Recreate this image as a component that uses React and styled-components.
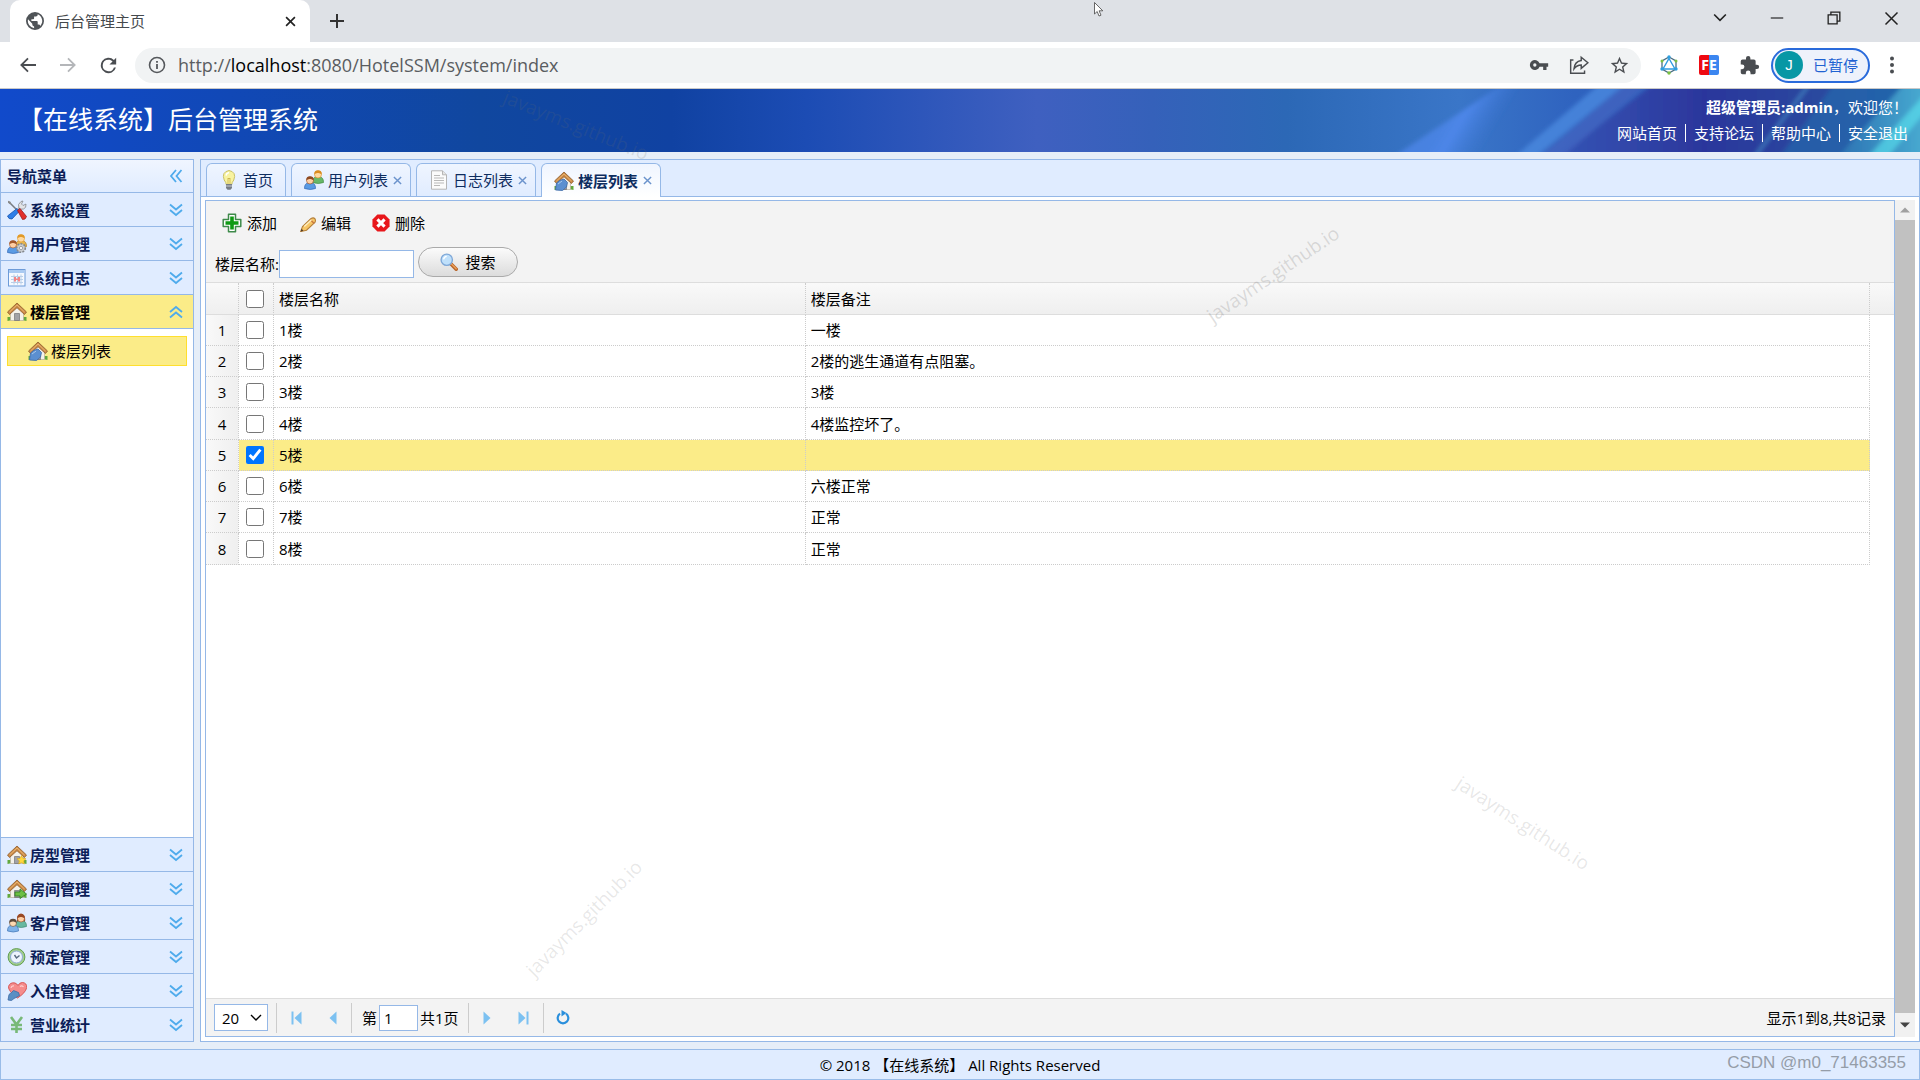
import React, { useState } from 'react'
import styled, { createGlobalStyle, css } from 'styled-components'

const GlobalStyle = createGlobalStyle`
  * {
    box-sizing: border-box;
  }
  body {
    margin: 0;
    overflow: hidden;
    background: #fff;
  }
  body, button, input, select {
    font-family: "Open Sans", "Noto Sans CJK SC", sans-serif;
    font-size: 15px;
    line-height: 20px;
    color: #000;
  }
  button {
    padding: 0;
    border: 0;
    background: none;
    white-space: nowrap;
  }
  a {
    color: inherit;
    text-decoration: none;
  }
  svg {
    display: block;
    flex: none;
  }
`

const Shell = styled.div`
  position: relative;
  display: flex;
  flex-direction: column;
  height: 100vh;
  overflow: hidden;
`

/* browser chrome */

const TitleBar = styled.div`
  display: flex;
  flex: none;
  height: 42px;
  padding-left: 10px;
  background: #dee1e6;
`

const BrowserTab = styled.div`
  display: flex;
  align-items: center;
  width: 300px;
  padding: 0 12px 0 16px;
  gap: 11px;
  border-radius: 10px 10px 0 0;
  background: #fff;
  color: #45494d;
`

const BrowserTabTitle = styled.span`
  flex: 1;
`

const ChromeButton = styled.button`
  display: flex;
  align-items: center;
  justify-content: center;
  flex: none;
  width: ${p => p.$width || 40}px;
  height: 36px;
  color: ${p => p.$color || '#4a4d51'};
`

const TabClose = styled(ChromeButton)`
  width: 16px;
`

const NewTab = styled(ChromeButton)`
  width: 54px;
  height: 42px;
`

const WindowControls = styled.div`
  display: flex;
  margin-left: auto;
`

const BrowserBar = styled.div`
  display: flex;
  align-items: center;
  flex: none;
  height: 47px;
  padding: 0 14px 0 8px;
  border-bottom: 1px solid #c9c9c9;
  background: #fff;
`

const AddressBar = styled.div`
  display: flex;
  align-items: center;
  flex: 1;
  height: 35px;
  margin: 0 8px 0 7px;
  padding: 0 2px 0 13px;
  border-radius: 18px;
  background: #f1f3f4;
`

const Url = styled.div`
  flex: 1;
  margin-left: 12px;
  font-size: 18px;
  line-height: 24px;
  color: #5a5d61;

  b {
    font-weight: 400;
    color: #000;
  }
`

const Profile = styled.button`
  display: flex;
  align-items: center;
  gap: 10px;
  width: 99px;
  height: 35px;
  margin: 0 8px 0 2px;
  padding-left: 2px;
  border: 2px solid #2a6bdb;
  border-radius: 18px;
  background: #eef2fb;
  color: #1f62d2;
`

const Avatar = styled.span`
  width: 28px;
  height: 28px;
  border-radius: 50%;
  background: #0797a5;
  color: #fff;
  font-family: "Liberation Sans", sans-serif;
  line-height: 28px;
  text-align: center;
`

/* page header and footer */

const Header = styled.header`
  position: relative;
  display: flex;
  justify-content: space-between;
  flex: none;
  height: 63px;
  padding: 5px 12px 0 18px;
  overflow: hidden;
  color: #fff;
  background: linear-gradient(
    90deg,
    #114acb 0%,
    #1148b6 12%,
    #10479f 25%,
    #1042a2 35%,
    #1c4cb4 42%,
    #3f60c0 54%,
    #3561ba 60%,
    #2c68b6 67%,
    #3a76c8 76%,
    #2f63bf 82%,
    #2c56b0 100%
  );
`

const HeaderArt = styled.svg`
  position: absolute;
  top: 0;
  right: 0;
`

const SystemName = styled.h1`
  position: relative;
  margin: 0;
  font-size: 25px;
  font-weight: 400;
  line-height: 50px;
`

const HeaderSide = styled.div`
  position: relative;
  text-align: right;
  line-height: 26px;
`

const Links = styled.nav`
  display: flex;
  gap: 8px;
`

const Bar = styled.span`
  width: 1px;
  height: 18px;
  margin: 4px 0;
  background: #fff;
`

const Footer = styled.footer`
  flex: none;
  height: 31px;
  border: 1px solid #99bce8;
  background: #e0ecff;
  line-height: 31px;
  text-align: center;
`

/* layout panels */

const Workspace = styled.div`
  display: flex;
  flex: 1;
  gap: 6px;
  min-height: 0;
  padding: 7px 0;
  background: #e6eef8;
`

const Sidebar = styled.aside`
  display: flex;
  flex-direction: column;
  flex: none;
  width: 194px;
  border: 1px solid #95b8e7;
  background: #fff;
`

const sideHeader = css`
  display: flex;
  align-items: center;
  justify-content: space-between;
  flex: none;
  height: 34px;
  padding: 0 10px 0 6px;
  border: 0 solid #95b8e7;
  border-bottom-width: 1px;
  font-weight: 700;
  color: #0b1d57;
`

const SidebarTitle = styled.div`
  ${sideHeader}
  height: 33px;
  background: linear-gradient(#f0f5ff, #e0ecff);
`

const MenuHeader = styled.button`
  ${sideHeader}
  background: ${p => (p.$open ? '#fbec88' : '#e0ecff')};
  ${p => p.$open && 'color: #000;'}
  ${p => p.$docked && 'border-width: 1px 0 0;'}
`

const IconText = styled.span`
  display: flex;
  align-items: center;
  gap: 3px;
`

const MenuBody = styled.div`
  flex: 1;
  padding: 7px 6px;
`

const MenuLink = styled.a`
  display: flex;
  align-items: center;
  gap: 3px;
  height: 30px;
  padding-left: 20px;
  border: 1px solid #ffdf2e;
  background: #fbec88;
`

const Center = styled.main`
  display: flex;
  flex-direction: column;
  flex: 1;
  min-width: 0;
  border: 1px solid #95b8e7;
  background: #fff;
`

const TabStrip = styled.div`
  display: flex;
  gap: 5px;
  flex: none;
  height: 37px;
  padding: 3px 5px 0;
  border-bottom: 1px solid #95b8e7;
  background: #e0ecff;
`

const Tab = styled.div`
  display: flex;
  align-items: center;
  gap: 4px;
  padding: 0 ${p => (p.$closable ? 8 : 12)}px 0 12px;
  border: 1px solid #95b8e7;
  border-bottom: 0;
  border-radius: 6px 6px 0 0;
  background: linear-gradient(#eff5ff, #e0ecff);

  ${p =>
    p.$active &&
    css`
      margin-bottom: -1px;
      background: linear-gradient(#eff5ff, #fff);
    `}
`

const TabLabel = styled.button`
  display: flex;
  align-items: center;
  gap: 4px;
  font-weight: ${p => (p.$active ? 700 : 400)};
  color: #0e2d5f;
`

const TabContent = styled.div`
  display: flex;
  flex: 1;
  min-height: 0;
  padding: 3px 4px 4px;
`

const GridPanel = styled.section`
  display: flex;
  flex-direction: column;
  flex: 1;
  min-width: 0;
  border: 1px solid #95b8e7;
`

const ScrollTrack = styled.div`
  display: flex;
  flex-direction: column;
  flex: none;
  width: 20px;
  background: #f1f1f1;
`

const ScrollThumb = styled.div`
  flex: 1;
  background: #c1c1c1;
`

const ScrollArrow = styled.button`
  display: flex;
  align-items: center;
  justify-content: center;
  height: ${p => p.$height}px;
`

/* data grid */

const Toolbar = styled.div`
  flex: none;
  border-bottom: 1px solid #ddd;
  background: #f3f3f3;
`

const ToolRow = styled.div`
  display: flex;
  align-items: center;
  gap: 21px;
  height: 44px;
  padding-left: 16px;
`

const ToolButton = styled.button`
  display: flex;
  align-items: center;
  gap: 5px;
`

const SearchRow = styled.form`
  display: flex;
  align-items: center;
  height: 37px;
  padding-left: 9px;
`

const TextField = styled.input`
  width: ${p => p.$width}px;
  height: ${p => p.$height}px;
  padding: 0 4px;
  border: 1px solid #95b8e7;
  outline: 0;
  background: #fff;
`

const SearchButton = styled.button`
  display: flex;
  align-items: center;
  justify-content: center;
  gap: 7px;
  width: 100px;
  height: 30px;
  margin: 0 0 4px 4px;
  border: 1px solid #aaa;
  border-radius: 15px;
  background: linear-gradient(#fbfbfb, #dcdcdc);
`

const Table = styled.table`
  width: 100%;
  border-spacing: 0;
  table-layout: fixed;
  text-align: left;

  th,
  td {
    height: 31px;
    padding: 0 5px;
    border-right: 1px dotted #ccc;
    border-bottom: 1px dotted #ccc;
    font-weight: 400;
  }
  thead th {
    height: 32px;
    border-bottom-style: solid;
    border-bottom-color: #ddd;
    background: linear-gradient(#f9f9f9, #efefef);
  }
  tbody th {
    padding: 0;
    background: linear-gradient(90deg, #f9f9f9, #efefef);
    text-align: center;
  }
  tbody tr:nth-child(4n) > * {
    height: 32px;
  }
  th:last-child,
  td:last-child {
    border-right: 0;
  }
  td:last-child {
    border-bottom: 0;
    background: none;
  }
`

const Row = styled.tr`
  td {
    background: ${p => (p.$selected ? '#fbec88' : '#fff')};
  }
`

const Tick = styled.input`
  display: block;
  width: 18px;
  height: 18px;
  margin: 0 0 0 2px;
  accent-color: #0075ff;
`

const GridSpace = styled.div`
  flex: 1;
`

const Pager = styled.div`
  display: flex;
  align-items: center;
  flex: none;
  height: 38px;
  padding: 0 8px;
  border-top: 1px solid #ddd;
  background: #f3f3f3;
`

const SelectBox = styled.div`
  position: relative;
  margin-right: 6px;

  svg {
    position: absolute;
    top: 8px;
    right: 6px;
    pointer-events: none;
  }
`

const PageSize = styled.select`
  display: block;
  width: 54px;
  height: 27px;
  padding: 0 0 0 7px;
  border: 1px solid #95b8e7;
  border-radius: 0;
  background: #fff;
  appearance: none;
`

const Divider = styled.span`
  width: 1px;
  height: 30px;
  margin: 0 2px;
  background: #ccc;
`

const PageButton = styled.button`
  display: flex;
  align-items: center;
  justify-content: center;
  width: 35px;
  height: 30px;
`

const PageNumber = styled.label`
  display: flex;
  align-items: center;
  gap: 2px;
  padding: 0 7px 0 8px;
`

const PageInfo = styled.span`
  margin-left: auto;
`

/* overlays */

const Watermark = styled.span`
  position: absolute;
  left: ${p => p.$x}%;
  top: ${p => p.$y}%;
  font-size: 19px;
  line-height: 24px;
  color: rgba(110, 110, 110, ${p => p.$alpha || 0.22});
  transform: translate(-50%, -50%) rotate(${p => p.$angle}deg);
  pointer-events: none;
`

const Credit = styled.span`
  position: absolute;
  right: 14px;
  bottom: 5px;
  font-family: "Liberation Sans", sans-serif;
  font-size: 17px;
  line-height: 24px;
  color: #959da8;
`

const Pointer = styled.svg`
  position: absolute;
  left: 57%;
  top: 2px;
`

/* icons */

const Icon = ({ size = 20, box = 20, children, ...rest }) => (
  <svg width={size} height={size} viewBox={`0 0 ${box} ${box}`} fill="none" aria-hidden="true" {...rest}>
    {children}
  </svg>
)

const House = ({ children }) => (
  <Icon>
    <path d="M.5 19q9.500-3 19 0v-4H.5z" fill="#62a83c" />
    <path d="M3.500 10L10 4l6.500 6v8.500h-13z" fill="#f4f1ea" stroke="#b9ad9b" strokeWidth=".7" />
    <path d="M7.500 11.500h5v7h-5z" fill="#8f8f93" stroke="#6b6b70" strokeWidth=".6" />
    <path d="M9 12v6M11 12v6" stroke="#c4c4c8" strokeWidth=".7" />
    <path d="M.5 10L10 1l9.500 9-2 2.500L10 5.700l-7.500 6.800z" fill="#cd8b45" stroke="#8c5a2b" strokeWidth=".8" strokeLinejoin="round" />
    <path d="M2.500 10L10 3l7.500 7" stroke="#eab878" strokeWidth=".9" />
    {children}
  </Icon>
)

const HouseLink = () => (
  <House>
    <path d="M1.500 19l1-7 3-2.500 4.500-1.500 3.500 3.500-1 4.500-4 3.500z" fill="#5b8fd0" stroke="#3c69a6" strokeWidth=".8" />
    <path d="M4 13l4-3" stroke="#a9caee" />
  </House>
)

const HouseStar = () => (
  <House>
    <path d="M14.500 10.500l1.300 2.800 3.200.4-2.300 2.100.6 3.200-2.800-1.500-2.800 1.500.6-3.200-2.300-2.100 3.200-.4z" fill="#ffd83d" stroke="#d9a514" strokeWidth=".6" />
  </House>
)

const HouseGo = () => (
  <House>
    <path d="M8 13h5v-3l6.500 5-6.500 4.500V17H8z" fill="#6cbf43" stroke="#37812a" strokeWidth=".9" />
  </House>
)

const Person = ({ x, y, hair, face, shirt, edge }) => (
  <g transform={`translate(${x} ${y})`}>
    <path d="M0 12.500q0-5.500 4-5.500h3q4 0 4 5.500-5 2-11 0z" fill={shirt} stroke={edge} strokeWidth=".7" />
    <circle cx="5.500" cy="4.500" r="3.500" fill={face} stroke={hair} strokeWidth=".6" />
    <path d="M1.800 4.500Q1.500.3 5.500.3t3.700 4.200Q7.500 2.800 5.500 3 3 2.800 1.800 4.500z" fill={hair} />
  </g>
)

const Users = () => (
  <Icon>
    <Person x={8.500} y={0} hair="#d98c1f" face="#ffd9a0" shirt="#67b869" edge="#3e8a40" />
    <Person x={0.500} y={6} hair="#8f4a22" face="#ffcfa3" shirt="#5a9be4" edge="#2f66b5" />
  </Icon>
)

const UserGear = () => (
  <Icon>
    <Person x={8.500} y={0} hair="#e19a28" face="#ffd9a0" shirt="#e8b64c" edge="#b07b20" />
    <Person x={0.500} y={6} hair="#a3582c" face="#ffcfa3" shirt="#5a9be4" edge="#2f66b5" />
    <circle cx="14" cy="14" r="4.300" fill="#c9ccd0" stroke="#84888d" strokeWidth="1.600" strokeDasharray="2 1.200" />
    <circle cx="14" cy="14" r="1.600" fill="#fff" stroke="#84888d" strokeWidth=".7" />
  </Icon>
)

const Guests = () => (
  <Icon>
    <path d="M10 9q-1-8 4-8.500 5 .5 4 9z" fill="#9a4a25" />
    <Person x={8.500} y={1} hair="#9a4a25" face="#ffcfa3" shirt="#67b8a0" edge="#3e8a70" />
    <Person x={0.500} y={5.500} hair="#5c4a3a" face="#ffd9b0" shirt="#7fb2e8" edge="#3f74b5" />
  </Icon>
)

const Tools = () => (
  <Icon>
    <path d="M2 2l9 9" stroke="#777b80" strokeWidth="1.500" />
    <path d="M1 .8l2.500 1 .7 2-1.200.5-2-1.500z" fill="#888" />
    <path d="M13 7.500L4 17" stroke="#b8bcc2" strokeWidth="2.500" />
    <path d="M12 8.500Q10 4 14 1.500l2-.5-1.500 3 1.500 1.500 3-1.500q.5 4-2.500 5-2.500.5-4.500-.5z" fill="#e2e4e7" stroke="#85898e" strokeWidth=".8" />
    <path d="M10 8.500l2.500 2.500L5 19Q1.500 19.500.5 16z" fill="#2f7fe8" stroke="#1954ad" strokeWidth=".8" />
    <path d="M10.500 10.500l2.500-2 6.500 8-1.500 2.500-2.500.5z" fill="#e2302d" stroke="#9c1a1a" strokeWidth=".8" />
  </Icon>
)

const Calendar = () => (
  <Icon>
    <rect x="1.500" y="1.500" width="16.500" height="16.500" fill="#f5f9ff" stroke="#6d9bd8" />
    <path d="M2 2h15.500v3H2z" fill="#a9caf2" />
    <path d="M4 8.500h12M4 11.500h12M4 14.500h12M7 6.500v10M10.500 6.500v10M14 6.500v10" stroke="#b9cfe8" />
    <path d="M7 9h2v4.500H7zM11 9h2v4.500h-2zM8.500 10.500h3V12h-3z" fill="#f28585" />
  </Icon>
)

const Clock = () => (
  <Icon>
    <circle cx="9.500" cy="10" r="8.400" fill="#a5cf8c" stroke="#5f9d51" />
    <circle cx="9.500" cy="10" r="6" fill="#eef4fd" stroke="#8caad6" />
    <path d="M7.500 8l2 3 3-2.500" stroke="#576a7e" strokeWidth="1.400" />
  </Icon>
)

const Heart = () => (
  <Icon>
    <path d="M10.500 17Q1 10 1.500 5.500 3 1 8 2q2 .8 3 2.500 1.500-3 4.500-3 4.500.5 4.200 5Q18.500 12 10.500 17z" fill="#f58c8c" stroke="#d85656" />
    <path d="M4 7q.5-2.500 3-2M13 5.500q2-1.500 3.500.5" stroke="#ffd0d0" strokeWidth="1.200" />
    <path d="M1 19l1-5.500 2.500-2 2-2 5 2 1 3-3.500 2-2 1-2.500 2z" fill="#5b8fc4" stroke="#3c69a6" strokeWidth=".8" />
  </Icon>
)

const Yen = () => (
  <Icon>
    <path d="M4 2l5.500 7.500L15 2M9.500 9v9M4 10h11M4 14h11" stroke="#78b978" strokeWidth="2.600" />
  </Icon>
)

const Bulb = () => (
  <Icon>
    <path d="M7.200 14.500q0-2-2-4.500-3-8 4.800-9.500Q17.800 2 14.800 10q-2 2.500-2 4.500z" fill="#f8f3a0" stroke="#c5bb5a" strokeWidth=".9" />
    <path d="M7 5.500q.5-2.500 3-3" stroke="#fff" strokeWidth="1.500" />
    <path d="M9 14V8l1 1 1-1v6" stroke="#c4a83a" strokeWidth=".7" />
    <path d="M7 14h6v4l-1.500 1.700h-3L7 18z" fill="#777d85" />
    <path d="M7 16h6" stroke="#c7cbd0" />
  </Icon>
)

const Page = () => (
  <Icon>
    <path d="M2.500.800h11l4 4v14.400h-15z" fill="#fbfbfb" stroke="#b5b5b5" />
    <path d="M13.500.800v4h4" fill="#e4e4e4" stroke="#b5b5b5" />
    <path d="M5 5.500h6M5 8h10M5 10.500h10M5 13h10M5 15.500h6" stroke="#b9b9b9" />
  </Icon>
)

const Add = () => (
  <Icon>
    <path d="M6.500 1.200h7v5.300h5.300v7h-5.300v5.300h-7v-5.300H1.200v-7h5.300z" fill="#fff" stroke="#3e8a4a" strokeWidth="1.500" strokeLinejoin="round" />
    <path d="M8.200 3.500h3.600v4.700h4.700v3.600h-4.700v4.700H8.200v-4.700H3.500V8.200h4.700z" fill="#0f9a14" />
  </Icon>
)

const Pencil = () => (
  <Icon size={18}>
    <path d="M3 19.500l2-5.500L14.500 5q2.500-1.500 4 0t.5 4L9.500 18z" fill="#f7c667" stroke="#b5803a" strokeWidth="1.200" />
    <path d="M13.500 6l4.500 4.500" stroke="#c9793f" strokeWidth="1.500" />
    <path d="M7 14l8-7.500" stroke="#fff0c2" strokeWidth="1.500" />
    <path d="M3 19.500l1-3L6 18.500z" fill="#4d3a26" />
  </Icon>
)

const Remove = () => (
  <Icon size={18}>
    <path d="M6 .5h8L19.500 6v8L14 19.500H6L.5 14V6z" fill="#e8171b" />
    <path d="M6 6l8 8M14 6l-8 8" stroke="#fff" strokeWidth="3.400" />
  </Icon>
)

const Magnifier = () => (
  <Icon size={18}>
    <path d="M12 12l6 6" stroke="#b8662c" strokeWidth="4" strokeLinecap="round" />
    <path d="M12.500 12l5.500 5.500" stroke="#eea25a" strokeWidth="1.500" strokeLinecap="round" />
    <circle cx="7.500" cy="7.500" r="6.300" fill="#bfe0fb" stroke="#7fa8d8" strokeWidth="1.500" />
    <path d="M4 7q.5-3 3.500-3.300" stroke="#fff" strokeWidth="1.500" />
  </Icon>
)

const Chevrons = ({ angle = 0 }) => (
  <Icon size={14} box={14} style={{ transform: `rotate(${angle}deg)` }}>
    <path d="M1 1.500l6 5 6-5M1 7l6 5 6-5" stroke="#4fabec" strokeWidth="1.800" />
  </Icon>
)

const Cross = ({ size = 10, width = 1.600 }) => (
  <Icon size={size} box={10}>
    <path d="M1 1l8 8M9 1L1 9" stroke="currentColor" strokeWidth={width} />
  </Icon>
)

const Down = ({ size = 12 }) => (
  <Icon size={size} box={12}>
    <path d="M1 3l5 5 5-5" stroke="currentColor" strokeWidth="1.400" />
  </Icon>
)

const Globe = () => (
  <Icon size={18} box={24}>
    <path fill="#4f5357" d="M12 0a12 12 0 1 0 0 24 12 12 0 0 0 0-24zm-1.200 21.500a9.600 9.600 0 0 1-8.100-11.700l5.700 5.800v1.200a2.400 2.400 0 0 0 2.400 2.400zm8.300-3a2.400 2.400 0 0 0-2.300-1.700h-1.200v-3.600a1.200 1.200 0 0 0-1.200-1.200H7.200V9.600h2.400a1.200 1.200 0 0 0 1.200-1.200V6h2.400a2.400 2.400 0 0 0 2.400-2.400v-.5a9.600 9.600 0 0 1 3.500 15.400z" />
  </Icon>
)

const StrokeIcon = ({ d, size = 18, width = 2, fill = 'none' }) => (
  <Icon size={size} box={18}>
    <path d={d} fill={fill} stroke="currentColor" strokeWidth={width} />
  </Icon>
)

const ReloadIcon = () => (
  <Icon size={23} box={24}>
    <path fill="currentColor" d="M17.650 6.350A8 8 0 1 0 19.730 14h-2.080A6 6 0 1 1 12 6c1.660 0 3.140.690 4.220 1.780L13 11h7V4z" />
  </Icon>
)

const KeyIcon = () => (
  <Icon size={20} box={24}>
    <path fill="currentColor" d="M12.650 10A6 6 0 1 0 12.650 14H17v4h4v-4h2v-4zM7 14a2 2 0 1 1 0-4 2 2 0 0 1 0 4z" />
  </Icon>
)

const StarIcon = () => (
  <Icon size={21} box={24}>
    <path fill="currentColor" d="M22 9.240l-7.190-.620L12 2 9.190 8.630 2 9.240l5.460 4.730L5.820 21 12 17.270 18.180 21l-1.630-7.030zM12 15.400l-3.760 2.270 1-4.280-3.320-2.880 4.380-.380L12 6.100l1.710 4.040 4.380.380-3.320 2.880 1 4.280z" />
  </Icon>
)

const PuzzleIcon = () => (
  <Icon size={21} box={24}>
    <path fill="currentColor" d="M20.500 11H19V7a2 2 0 0 0-2-2h-4V3.500a2.500 2.500 0 0 0-5 0V5H4a2 2 0 0 0-2 2v3.800h1.500a2.700 2.700 0 0 1 0 5.400H2V20a2 2 0 0 0 2 2h3.800v-1.500a2.700 2.700 0 0 1 5.400 0V22H17a2 2 0 0 0 2-2v-4h1.500a2.500 2.500 0 0 0 0-5z" />
  </Icon>
)

const HexIcon = () => (
  <Icon>
    <path d="M10 2l7 4v8l-7 4-7-4V6z" stroke="#4b6d82" strokeWidth="1.300" />
    <path d="M10 3.500l6 10.500H4z" stroke="#2f9be0" strokeWidth="1.400" />
    <g fill="#2d9fe0">
      <circle cx="10" cy="2" r="1.700" />
      <circle cx="3" cy="14" r="1.700" />
      <circle cx="17" cy="14" r="1.700" />
    </g>
    <g fill="#7ac142">
      <circle cx="3" cy="6" r="1.500" />
      <circle cx="17" cy="6" r="1.500" />
      <circle cx="10" cy="18" r="1.700" />
    </g>
  </Icon>
)

const FeBadge = styled.span`
  width: 20px;
  height: 20px;
  border-radius: 2px;
  background: linear-gradient(90deg, #ee0a12 50%, #3b86f0 50%);
  color: #fff;
  font-size: 14px;
  font-weight: 700;
`

const PageArrow = ({ bar, flip }) => (
  <Icon size={14} box={14} style={flip ? { transform: 'scaleX(-1)' } : undefined}>
    <path d="M11.500.500v13L4.500 7z" fill="#7cc1f1" />
    {bar && <path d="M1.500.500h2v13h-2z" fill="#7cc1f1" />}
  </Icon>
)

const Refresh = () => (
  <Icon size={16} box={16}>
    <path d="M5 3.700A5.300 5.300 0 1 0 11 3.700" stroke="#2a8fdc" strokeWidth="2.200" />
    <path d="M6.500 0l5 3-5 3.500z" fill="#2a8fdc" />
  </Icon>
)

/* data */

const topMenus = [
  { title: '系统设置', icon: Tools },
  { title: '用户管理', icon: UserGear },
  { title: '系统日志', icon: Calendar }
]

const bottomMenus = [
  { title: '房型管理', icon: HouseStar },
  { title: '房间管理', icon: HouseGo },
  { title: '客户管理', icon: Guests },
  { title: '预定管理', icon: Clock },
  { title: '入住管理', icon: Heart },
  { title: '营业统计', icon: Yen }
]

const tabs = [
  { title: '首页', icon: Bulb },
  { title: '用户列表', icon: Users, closable: true },
  { title: '日志列表', icon: Page, closable: true },
  { title: '楼层列表', icon: HouseLink, closable: true }
]

const floors = [
  { id: 1, name: '1楼', remark: '一楼' },
  { id: 2, name: '2楼', remark: '2楼的逃生通道有点阻塞。' },
  { id: 3, name: '3楼', remark: '3楼' },
  { id: 4, name: '4楼', remark: '4楼监控坏了。' },
  { id: 5, name: '5楼', remark: '' },
  { id: 6, name: '6楼', remark: '六楼正常' },
  { id: 7, name: '7楼', remark: '正常' },
  { id: 8, name: '8楼', remark: '正常' }
]

const links = ['网站首页', '支持论坛', '帮助中心', '安全退出']

const watermarks = [
  { x: 30, y: 11.600, angle: 22, alpha: 0.18 },
  { x: 66.300, y: 25.400, angle: -34 },
  { x: 79.300, y: 76.200, angle: 33, alpha: 0.16 },
  { x: 30.400, y: 85, angle: -45, alpha: 0.16 }
]

const BrowserChrome = () => (
  <>
    <TitleBar>
      <BrowserTab>
        <Globe />
        <BrowserTabTitle>后台管理主页</BrowserTabTitle>
        <TabClose aria-label="关闭标签页" $color="#222">
          <Cross size={11} width={1.500} />
        </TabClose>
      </BrowserTab>
      <NewTab $color="#333" aria-label="新标签页">
        <StrokeIcon d="M9 2v14M2 9h14" />
      </NewTab>
      <WindowControls>
        <ChromeButton $width={57} $color="#222" aria-label="搜索标签页">
          <Down size={14} />
        </ChromeButton>
        <ChromeButton $width={57} $color="#222" aria-label="最小化">
          <StrokeIcon size={14} width={1.500} d="M1 9h16" />
        </ChromeButton>
        <ChromeButton $width={57} $color="#222" aria-label="还原">
          <StrokeIcon size={14} width={1.700} d="M1.500 5h11.500v11.500H1.500zM5 5V1.500h11.500V13H13" />
        </ChromeButton>
        <ChromeButton $width={58} $color="#222" aria-label="关闭">
          <Cross size={15} width={1} />
        </ChromeButton>
      </WindowControls>
    </TitleBar>
    <BrowserBar>
      <ChromeButton aria-label="后退">
        <StrokeIcon size={16} d="M18 9H2M9 1.500L1.500 9 9 16.500" />
      </ChromeButton>
      <ChromeButton $color="#b4b6b9" aria-label="前进">
        <StrokeIcon size={16} d="M0 9h16M9 1.500L16.500 9 9 16.500" />
      </ChromeButton>
      <ChromeButton aria-label="刷新">
        <ReloadIcon />
      </ChromeButton>
      <AddressBar>
        <Icon size={18} box={18}>
          <circle cx="9" cy="9" r="7.500" stroke="#55585c" strokeWidth="1.600" />
          <path d="M9 8v5M9 5v1.700" stroke="#55585c" strokeWidth="1.800" />
        </Icon>
        <Url>
          http://<b>localhost</b>:8080/HotelSSM/system/index
        </Url>
        <ChromeButton aria-label="密码">
          <KeyIcon />
        </ChromeButton>
        <ChromeButton aria-label="分享">
          <StrokeIcon size={20} width={1.300} d="M4 4.500H1.500v12H14V14M11 2l6 5-6 5V9Q7 9 4.500 12.500 5 6 11 5z" />
        </ChromeButton>
        <ChromeButton aria-label="收藏">
          <StarIcon />
        </ChromeButton>
      </AddressBar>
      <ChromeButton aria-label="扩展程序">
        <HexIcon />
      </ChromeButton>
      <ChromeButton>
        <FeBadge>FE</FeBadge>
      </ChromeButton>
      <ChromeButton aria-label="管理扩展程序">
        <PuzzleIcon />
      </ChromeButton>
      <Profile>
        <Avatar>J</Avatar>
        已暂停
      </Profile>
      <ChromeButton $width={28} aria-label="菜单">
        <Icon size={18} box={18}>
          <g fill="#4a4d51">
            <circle cx="9" cy="2.500" r="2" />
            <circle cx="9" cy="9" r="2" />
            <circle cx="9" cy="15.500" r="2" />
          </g>
        </Icon>
      </ChromeButton>
    </BrowserBar>
  </>
)

const PageHeader = () => (
  <Header>
    <HeaderArt width="560" height="63" viewBox="0 0 560 63" aria-hidden="true">
      <defs>
        <filter id="soft" x="-5%" y="-30%" width="110%" height="160%">
          <feGaussianBlur stdDeviation="2" />
        </filter>
        <linearGradient id="beam" gradientUnits="userSpaceOnUse" x1="85" y1="32" x2="125" y2="56">
          <stop offset="0" stopColor="#4f88ec" stopOpacity=".7" />
          <stop offset=".3" stopColor="#4f88ec" stopOpacity=".9" />
          <stop offset="1" stopColor="#3f78d8" stopOpacity="0" />
        </linearGradient>
        <linearGradient id="violet">
          <stop offset="0" stopColor="#3455b5" />
          <stop offset=".4" stopColor="#2c369c" />
          <stop offset=".7" stopColor="#2a489f" />
          <stop offset="1" stopColor="#2563a8" />
        </linearGradient>
        <linearGradient id="cyan">
          <stop offset="0" stopColor="#2c74b4" />
          <stop offset="1" stopColor="#4fb8d8" />
        </linearGradient>
      </defs>
      <g filter="url(#soft)">
        <path d="M196 70L296-7h270v77z" fill="url(#violet)" />
        <path d="M30 70L146-7h80L110 70z" fill="url(#beam)" />
        <path d="M152 70L242-7h26l-95 77z" fill="#4a8ade" opacity=".8" />
        <path d="M176 70L268-7h22l-90 77z" fill="#4a62c0" opacity=".6" />
        <path d="M418 70L476-7h90v77z" fill="#2467ac" opacity=".7" />
        <path d="M393 70L451-7" stroke="#4a9ad0" strokeWidth="2.500" opacity=".7" />
        <path d="M476 70L546-7h20v77z" fill="url(#cyan)" opacity=".85" />
        <path d="M506 70L566 4v18l-40 48z" fill="#5ce6f0" opacity=".6" />
      </g>
    </HeaderArt>
    <SystemName>【在线系统】后台管理系统</SystemName>
    <HeaderSide>
      <div>
        <strong>超级管理员:admin</strong>，欢迎您！
      </div>
      <Links>
        {links.map((link, i) => (
          <React.Fragment key={link}>
            {i > 0 && <Bar />}
            <a href="#">{link}</a>
          </React.Fragment>
        ))}
      </Links>
    </HeaderSide>
  </Header>
)

const MenuItem = ({ title, icon: MenuIcon, open, docked }) => (
  <MenuHeader $open={open} $docked={docked} aria-expanded={!!open}>
    <IconText>
      <MenuIcon />
      {title}
    </IconText>
    <Chevrons angle={open ? 180 : 0} />
  </MenuHeader>
)

const FloorGrid = () => {
  const [selected, setSelected] = useState([5])

  const toggle = id =>
    setSelected(ids => (ids.includes(id) ? ids.filter(i => i !== id) : [...ids, id]))

  const toggleAll = () =>
    setSelected(ids => (ids.length === floors.length ? [] : floors.map(f => f.id)))

  return (
    <Table>
      <colgroup>
        <col style={{ width: 33 }} />
        <col style={{ width: 35 }} />
        <col style={{ width: '31.5%' }} />
        <col />
        <col style={{ width: 24 }} />
      </colgroup>
      <thead>
        <tr>
          <th />
          <th>
            <Tick
              type="checkbox"
              aria-label="全选"
              checked={selected.length === floors.length}
              onChange={toggleAll}
            />
          </th>
          <th scope="col">楼层名称</th>
          <th scope="col">楼层备注</th>
          <th />
        </tr>
      </thead>
      <tbody>
        {floors.map(({ id, name, remark }) => (
          <Row key={id} $selected={selected.includes(id)}>
            <th scope="row">{id}</th>
            <td>
              <Tick
                type="checkbox"
                aria-label={name}
                checked={selected.includes(id)}
                onChange={() => toggle(id)}
              />
            </td>
            <td>{name}</td>
            <td>{remark}</td>
            <td />
          </Row>
        ))}
      </tbody>
    </Table>
  )
}

const GridPager = () => (
  <Pager>
    <SelectBox>
      <PageSize aria-label="每页条数" defaultValue="20">
        <option>10</option>
        <option>20</option>
        <option>50</option>
      </PageSize>
      <Down size={12} />
    </SelectBox>
    <Divider />
    <PageButton aria-label="第一页">
      <PageArrow bar />
    </PageButton>
    <PageButton aria-label="上一页">
      <PageArrow />
    </PageButton>
    <Divider />
    <PageNumber>
      第
      <TextField $width={39} $height={26} defaultValue="1" />
      共1页
    </PageNumber>
    <Divider />
    <PageButton aria-label="下一页">
      <PageArrow flip />
    </PageButton>
    <PageButton aria-label="最后一页">
      <PageArrow bar flip />
    </PageButton>
    <Divider />
    <PageButton aria-label="刷新">
      <Refresh />
    </PageButton>
    <PageInfo>显示1到8,共8记录</PageInfo>
  </Pager>
)

const App = () => {
  const [current, setCurrent] = useState('楼层列表')

  return (
    <Shell lang="zh-CN">
      <GlobalStyle />
      <BrowserChrome />
      <PageHeader />
      <Workspace>
        <Sidebar>
          <SidebarTitle>
            导航菜单
            <Chevrons angle={90} />
          </SidebarTitle>
          {topMenus.map(menu => (
            <MenuItem key={menu.title} {...menu} />
          ))}
          <MenuItem title="楼层管理" icon={House} open />
          <MenuBody>
            <MenuLink href="#">
              <HouseLink />
              楼层列表
            </MenuLink>
          </MenuBody>
          {bottomMenus.map(menu => (
            <MenuItem key={menu.title} {...menu} docked />
          ))}
        </Sidebar>
        <Center>
          <TabStrip>
            {tabs.map(({ title, icon: TabIcon, closable }) => (
              <Tab key={title} $active={title === current} $closable={closable}>
                <TabLabel $active={title === current} onClick={() => setCurrent(title)}>
                  <TabIcon />
                  {title}
                </TabLabel>
                {closable && (
                  <ChromeButton $width={10} $color="#6b93cc" aria-label={`关闭${title}`}>
                    <Cross size={9} />
                  </ChromeButton>
                )}
              </Tab>
            ))}
          </TabStrip>
          <TabContent>
            <GridPanel>
              <Toolbar>
                <ToolRow>
                  <ToolButton>
                    <Add />
                    添加
                  </ToolButton>
                  <ToolButton>
                    <Pencil />
                    编辑
                  </ToolButton>
                  <ToolButton>
                    <Remove />
                    删除
                  </ToolButton>
                </ToolRow>
                <SearchRow onSubmit={e => e.preventDefault()}>
                  <label htmlFor="floor-name">楼层名称:</label>
                  <TextField id="floor-name" $width={135} $height={28} />
                  <SearchButton>
                    <Magnifier />
                    搜索
                  </SearchButton>
                </SearchRow>
              </Toolbar>
              <FloorGrid />
              <GridSpace />
              <GridPager />
            </GridPanel>
            <ScrollTrack>
              <ScrollArrow $height={20} aria-label="向上滚动">
                <Icon size={10} box={10}>
                  <path d="M0 7.500l5-5 5 5z" fill="#a0a0a0" />
                </Icon>
              </ScrollArrow>
              <ScrollThumb />
              <ScrollArrow $height={24} aria-label="向下滚动">
                <Icon size={10} box={10}>
                  <path d="M0 2.500l5 5 5-5z" fill="#444" />
                </Icon>
              </ScrollArrow>
            </ScrollTrack>
          </TabContent>
        </Center>
      </Workspace>
      <Footer>© 2018 【在线系统】 All Rights Reserved</Footer>
      {watermarks.map(({ x, y, angle, alpha }) => (
        <Watermark key={x} $x={x} $y={y} $angle={angle} $alpha={alpha}>
          javayms.github.io
        </Watermark>
      ))}
      <Credit>CSDN @m0_71463355</Credit>
      <Pointer width="10" height="15" viewBox="0 0 10 15" aria-hidden="true">
        <path d="M.5.5v11.500l2.700-2.500 1.800 4.500 2-.8-1.900-4.400h3.700z" fill="#fff" stroke="#444" strokeWidth=".8" />
      </Pointer>
    </Shell>
  )
}

export default App
